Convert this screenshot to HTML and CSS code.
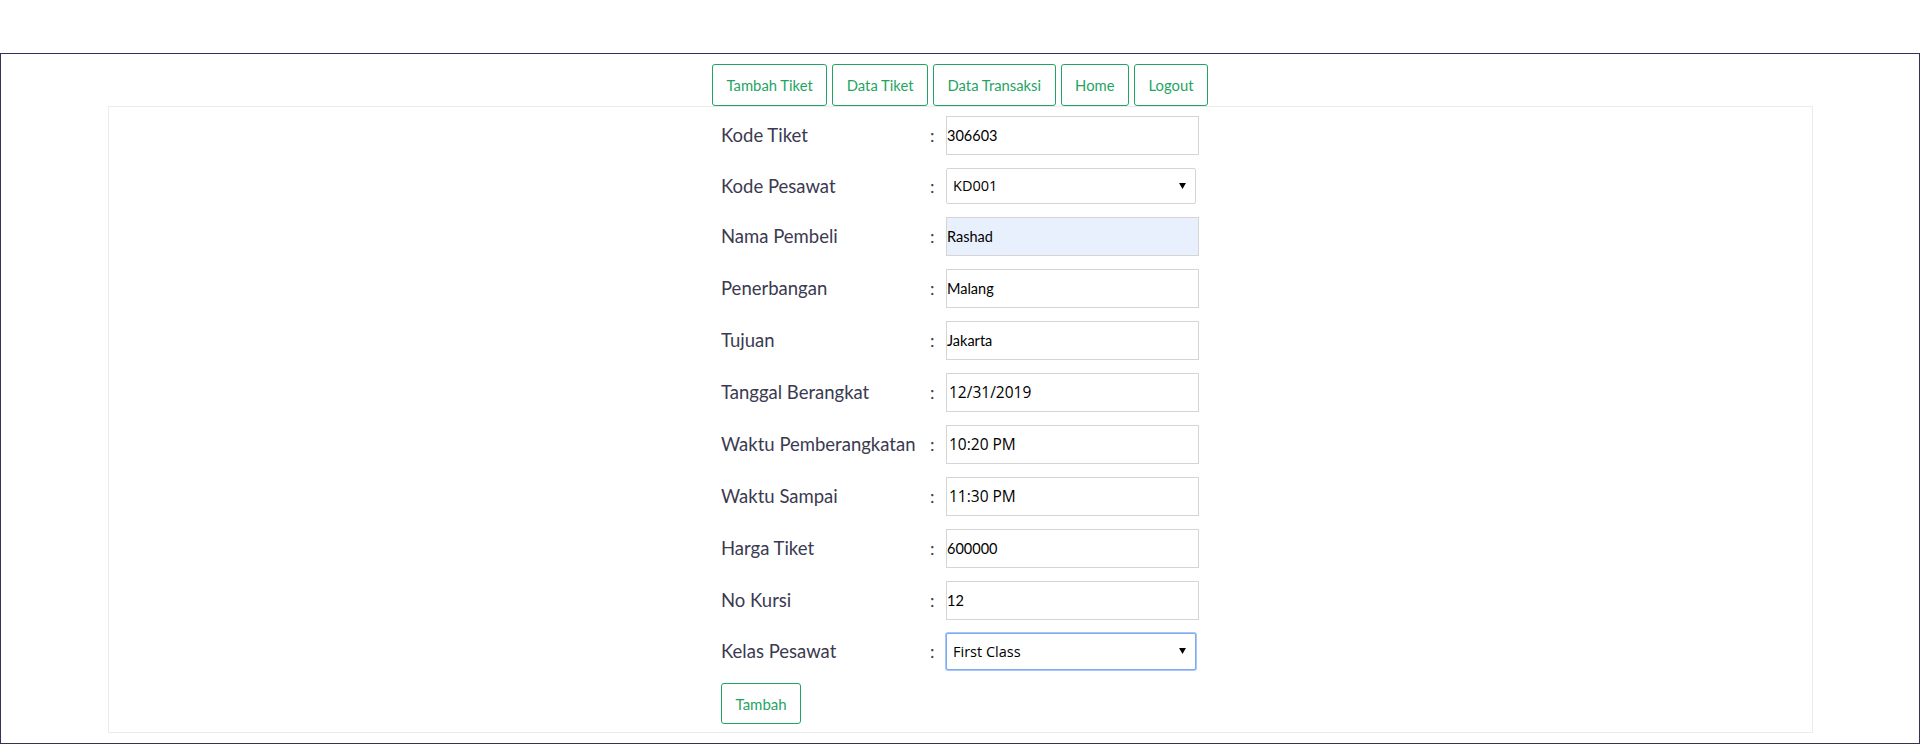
FILE: index.html
```html
<!DOCTYPE html>
<html lang="id">
<head>
<meta charset="utf-8">
<title>Tambah Tiket</title>
<link rel="stylesheet" href="styles.css">
</head>
<body>
<div class="frame">
  <nav class="menu">
    <a class="btn" href="#">Tambah Tiket</a>
    <a class="btn" href="#">Data Tiket</a>
    <a class="btn" href="#">Data Transaksi</a>
    <a class="btn" href="#">Home</a>
    <a class="btn" href="#">Logout</a>
  </nav>
  <div class="panel">
    <form class="form">
      <div class="row"><label class="label">Kode Tiket</label><span class="colon">:</span><input class="field" type="text" value="306603"></div>
      <div class="row row-select"><label class="label">Kode Pesawat</label><span class="colon">:</span>
        <div class="select-wrap"><select class="field select"><option>KD001</option></select><svg class="caret" width="8" height="7" viewBox="0 0 8 7"><path d="M0 0H8L4 7Z" fill="#000"/></svg></div></div>
      <div class="row"><label class="label">Nama Pembeli</label><span class="colon">:</span><input class="field autofill" type="text" value="Rashad"></div>
      <div class="row"><label class="label">Penerbangan</label><span class="colon">:</span><input class="field" type="text" value="Malang"></div>
      <div class="row"><label class="label">Tujuan</label><span class="colon">:</span><input class="field" type="text" value="Jakarta"></div>
      <div class="row"><label class="label">Tanggal Berangkat</label><span class="colon">:</span><input class="field field-alt" type="text" value="12/31/2019"></div>
      <div class="row"><label class="label">Waktu Pemberangkatan</label><span class="colon">:</span><input class="field field-alt" type="text" value="10:20 PM"></div>
      <div class="row"><label class="label">Waktu Sampai</label><span class="colon">:</span><input class="field field-alt" type="text" value="11:30 PM"></div>
      <div class="row"><label class="label">Harga Tiket</label><span class="colon">:</span><input class="field" type="text" value="600000"></div>
      <div class="row"><label class="label">No Kursi</label><span class="colon">:</span><input class="field" type="text" value="12"></div>
      <div class="row row-select"><label class="label">Kelas Pesawat</label><span class="colon">:</span>
        <div class="select-wrap"><select class="field select focused"><option>First Class</option></select><svg class="caret" width="8" height="7" viewBox="0 0 8 7"><path d="M0 0H8L4 7Z" fill="#000"/></svg></div></div>
      <div class="actions"><button class="btn" type="button">Tambah</button></div>
    </form>
  </div>
</div>
</body>
</html>
```
FILE: styles.css
```css
html, body {
  margin: 0;
  background: #fff;
}
body {
  padding-top: 53px;
  font-family: Lato, "Liberation Sans", sans-serif;
}
.frame {
  box-sizing: border-box;
  width: 1920px;
  border: 1px solid #35325a;
  padding: 10px 0 10px;
}
.menu {
  display: flex;
  justify-content: center;
  gap: 5px;
}
.btn {
  display: inline-flex;
  align-items: center;
  justify-content: center;
  box-sizing: border-box;
  height: 42px;
  padding: 0 13.5px;
  border: 1px solid #1fa463;
  border-radius: 3px;
  background: #fff;
  color: #1fa463;
  font-family: Lato, "Liberation Sans", sans-serif;
  font-size: 14.8px;
  text-decoration: none;
}
.panel {
  margin: 0 106px 0 107px;
  border: 1px solid #ebebeb;
}
.form {
  width: 479px;
  margin: 0 auto;
  padding: 2px 0 8px;
}
.row {
  display: grid;
  grid-template-columns: 209px 16px 254px;
  align-items: center;
  padding: 6.5px 0;
}
.label {
  font-size: 18.5px;
  color: #3b3a50;
  white-space: nowrap;
}
.colon {
  font-size: 18px;
  color: #3b3a50;
}
.field {
  box-sizing: border-box;
  width: 253px;
  height: 39px;
  margin: 0;
  padding: 0;
  border: 1px solid #d5d5d5;
  border-radius: 0;
  background: #fff;
  color: #000;
  font-family: Lato, "Liberation Sans", sans-serif;
  font-size: 14.5px;
  outline: none;
}
.field-alt {
  padding-left: 2px;
  font-family: "Open Sans", "Liberation Sans", sans-serif;
  font-size: 15.5px;
}
.autofill {
  background: #e8f0fe;
}
.select-wrap {
  position: relative;
  width: 250px;
}
.select {
  -webkit-appearance: none;
  appearance: none;
  width: 250px;
  height: 36px;
  padding-left: 6px;
  border-radius: 2px;
  font-family: "Open Sans", "Liberation Sans", sans-serif;
  font-size: 14.5px;
}
.select.focused {
  height: 37px;
  border-color: #7ea9f3;
  box-shadow: 0 0 0 1px #a9c6f8;
}
.caret {
  position: absolute;
  right: 10px;
  top: 50%;
  margin-top: -3px;
  width: 7px;
  height: 6px;
}
.actions {
  padding-top: 7px;
}
.actions .btn {
  height: 41px;
  font-size: 15px;
}
```
